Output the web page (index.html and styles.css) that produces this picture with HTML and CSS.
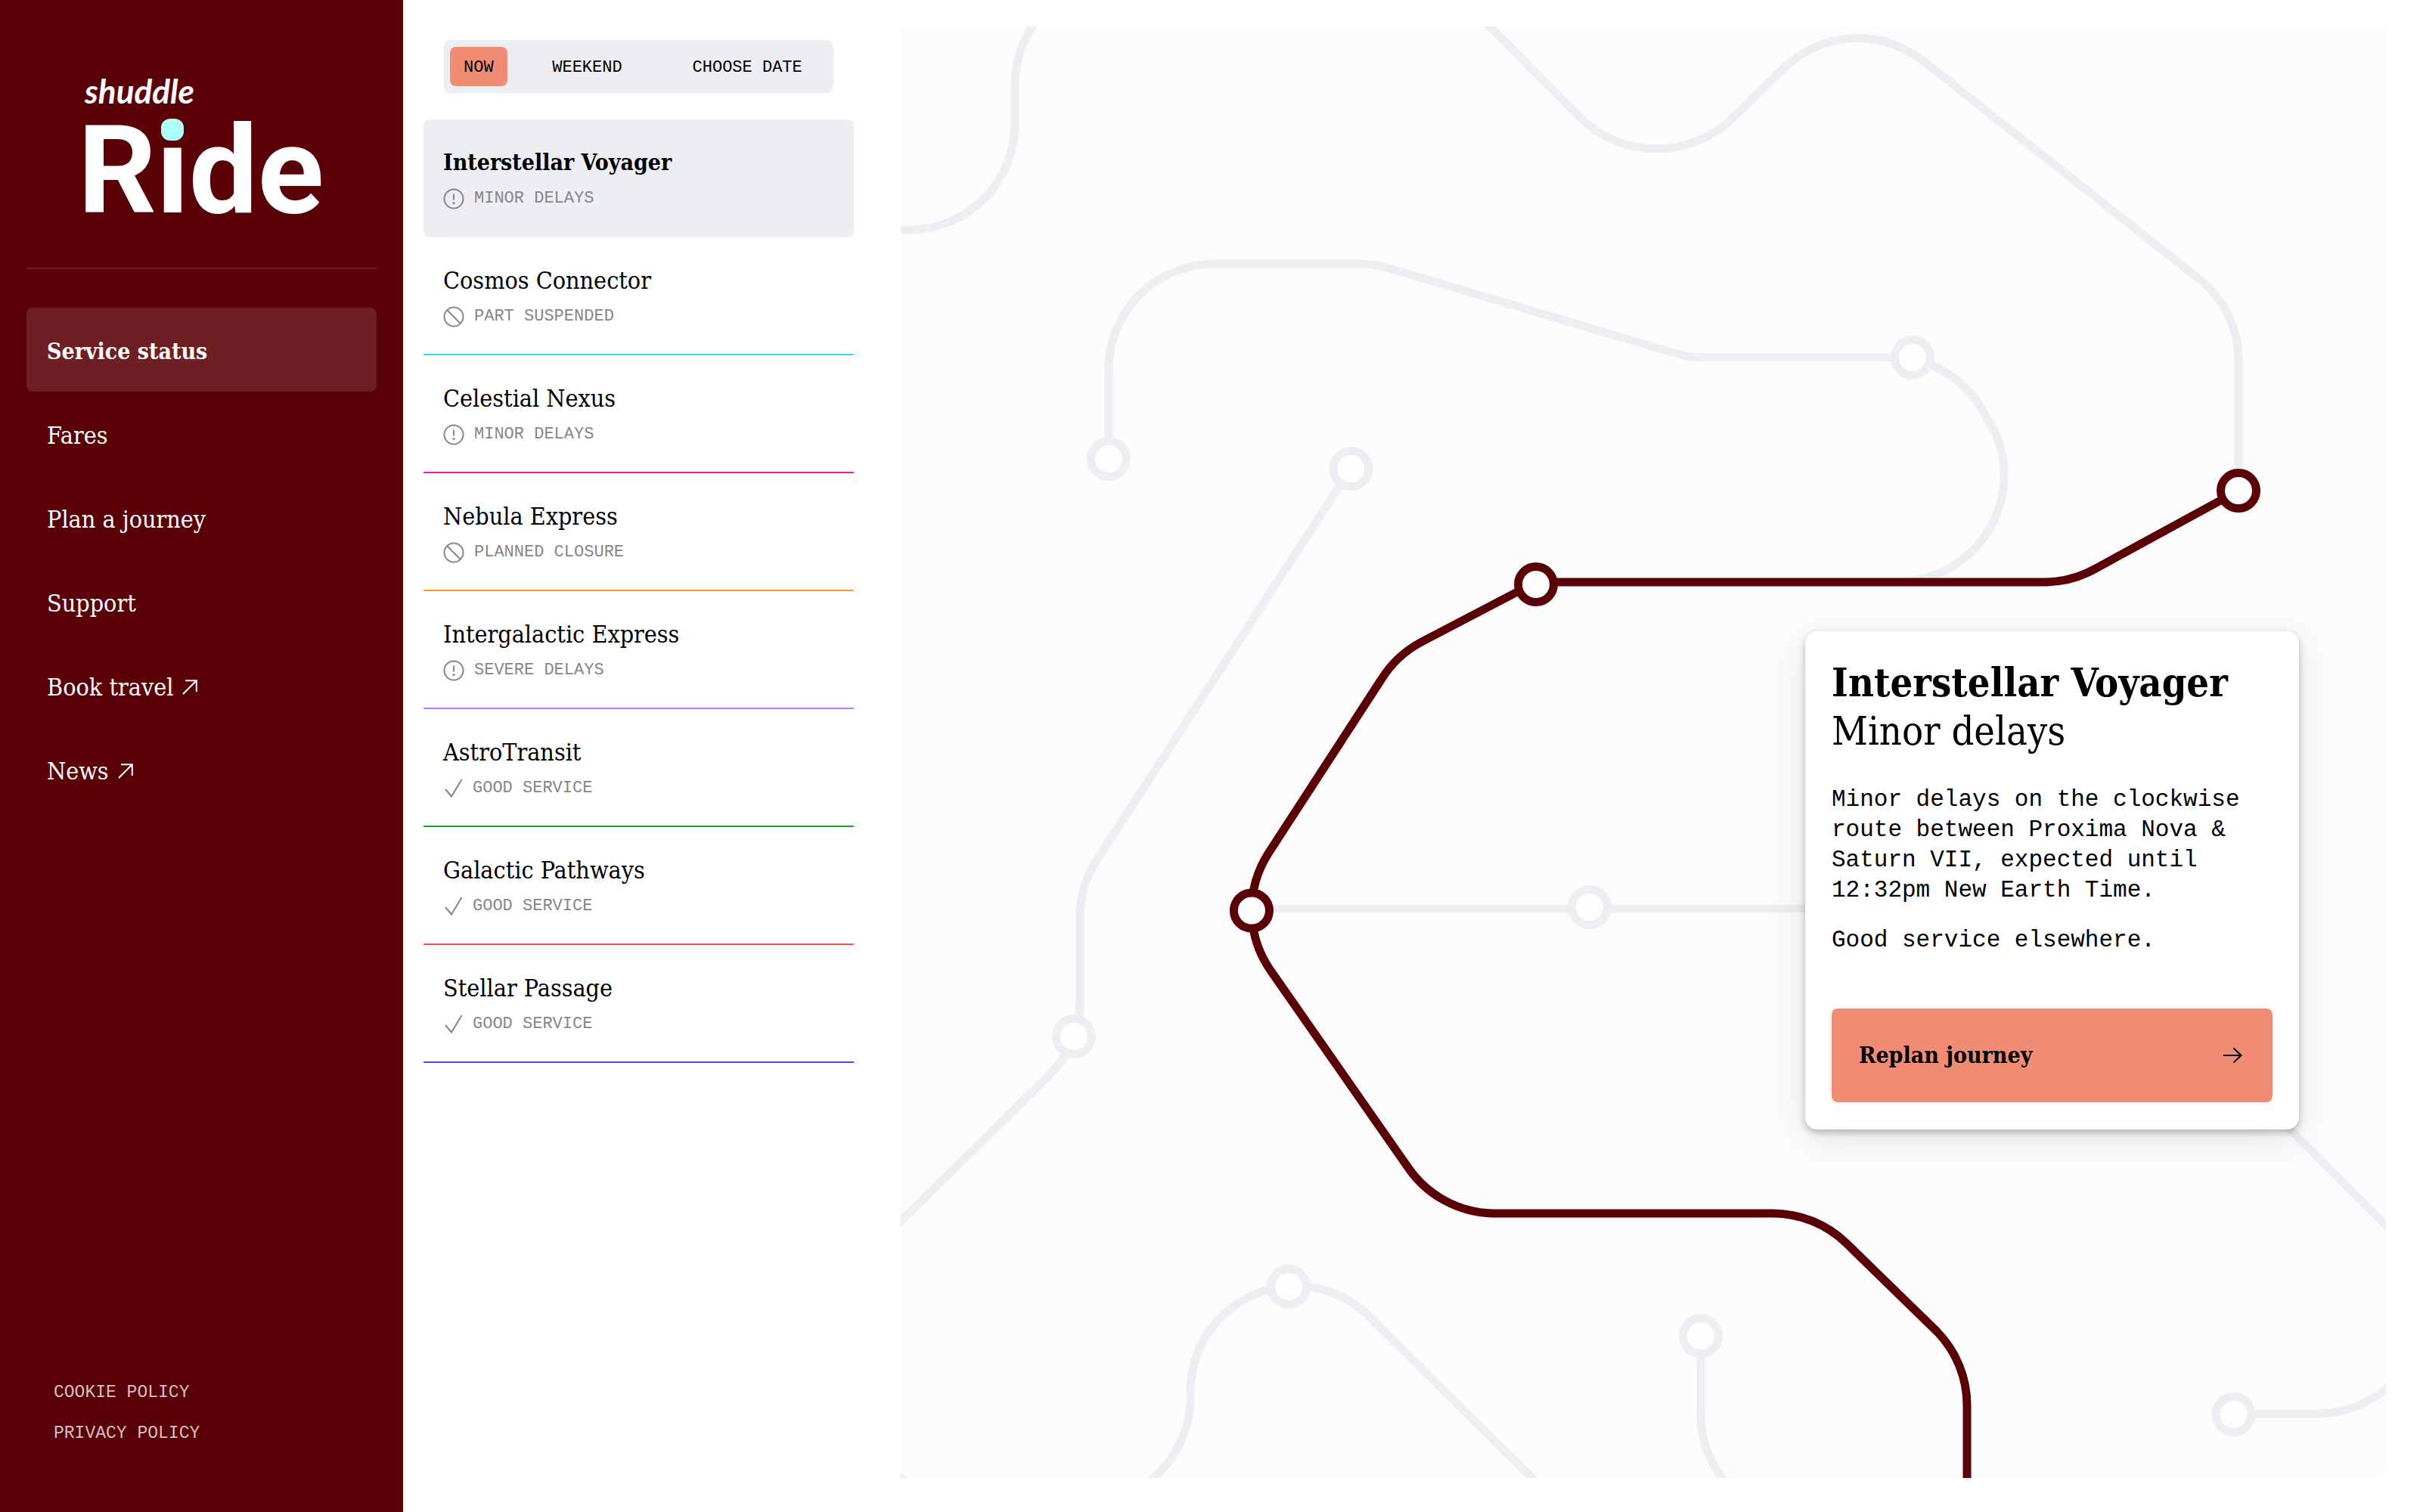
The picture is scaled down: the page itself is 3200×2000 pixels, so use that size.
FILE: index.html
```html
<!DOCTYPE html>
<html lang="en">
<head>
<meta charset="utf-8">
<title>Shuddle Ride – Service status</title>
<link rel="stylesheet" href="styles.css">
</head>
<body>
<svg class="sprite" aria-hidden="true">
  <symbol id="icon-alert" viewBox="0 0 28 28"><circle cx="14" cy="14" r="12.5"/><path d="M14 7.500v8"/><circle class="solid" cx="14" cy="19.500" r="1.600"/></symbol>
  <symbol id="icon-blocked" viewBox="0 0 28 28"><circle cx="14" cy="14" r="12.5"/><path d="M5.300 5.300l17.400 17.400"/></symbol>
  <symbol id="icon-check" viewBox="0 0 26 28"><path d="M3 15l8 9.500L24.500 2"/></symbol>
  <symbol id="icon-external" viewBox="0 0 20 20"><path d="M4 1.200h14.800V16M18.800 1.200L1 19"/></symbol>
  <symbol id="icon-arrow" viewBox="0 0 26 22"><path d="M1 11h23M14.500 1.500L24.500 11l-10 9.500"/></symbol>
</svg>
<div class="app">
  <aside class="sidebar">
    <a class="logo" href="#">
      <span class="logo-brand">shuddle</span>
      <span class="logo-name">R<span class="logo-i">i</span>de</span>
    </a>
    <nav class="nav">
      <a class="nav-link active" href="#" aria-current="page">Service status</a>
      <a class="nav-link" href="#">Fares</a>
      <a class="nav-link" href="#">Plan a journey</a>
      <a class="nav-link" href="#">Support</a>
      <a class="nav-link" href="#">Book travel <svg class="external"><use href="#icon-external"/></svg></a>
      <a class="nav-link" href="#">News <svg class="external"><use href="#icon-external"/></svg></a>
    </nav>
    <footer class="legal">
      <a href="#">COOKIE POLICY</a>
      <a href="#">PRIVACY POLICY</a>
    </footer>
  </aside>

  <section class="services">
    <div class="tabs">
      <button class="tab selected" type="button">NOW</button>
      <button class="tab" type="button">WEEKEND</button>
      <button class="tab" type="button">CHOOSE DATE</button>
    </div>
    <ul class="lines">
      <li><a class="line current" href="#"><span class="line-name">Interstellar Voyager</span><span class="line-status"><svg class="round"><use href="#icon-alert"/></svg>MINOR DELAYS</span></a></li>
      <li><a class="line cyan" href="#"><span class="line-name">Cosmos Connector</span><span class="line-status"><svg class="round"><use href="#icon-blocked"/></svg>PART SUSPENDED</span></a></li>
      <li><a class="line pink" href="#"><span class="line-name">Celestial Nexus</span><span class="line-status"><svg class="round"><use href="#icon-alert"/></svg>MINOR DELAYS</span></a></li>
      <li><a class="line orange" href="#"><span class="line-name">Nebula Express</span><span class="line-status"><svg class="round"><use href="#icon-blocked"/></svg>PLANNED CLOSURE</span></a></li>
      <li><a class="line purple" href="#"><span class="line-name">Intergalactic Express</span><span class="line-status"><svg class="round"><use href="#icon-alert"/></svg>SEVERE DELAYS</span></a></li>
      <li><a class="line green" href="#"><span class="line-name">AstroTransit</span><span class="line-status"><svg class="check"><use href="#icon-check"/></svg>GOOD SERVICE</span></a></li>
      <li><a class="line red" href="#"><span class="line-name">Galactic Pathways</span><span class="line-status"><svg class="check"><use href="#icon-check"/></svg>GOOD SERVICE</span></a></li>
      <li><a class="line indigo" href="#"><span class="line-name">Stellar Passage</span><span class="line-status"><svg class="check"><use href="#icon-check"/></svg>GOOD SERVICE</span></a></li>
    </ul>
  </section>

  <main class="map">
    <svg class="network" viewBox="1191 35 1964 1920" preserveAspectRatio="xMidYMid slice" role="img" aria-label="Route map">
      <g class="routes">
        <path d="M1191 304H1202A140 140 0 0 0 1342 165V112A140 140 0 0 1 1482 -28"/>
        <path d="M1960 25L2090 156A144 144 0 0 0 2291 156L2357 92A140 140 0 0 1 2546 83L2909 370A135 135 0 0 1 2960 475V640"/>
        <path d="M1466 607V487A140 140 0 0 1 1606 349H1797Q1817 349 1837 355L2214 467Q2234 473 2254 473H2529C2575 487 2608 515 2627 552A140 140 0 0 1 2510 769"/>
        <path d="M1786 620L1450 1138A140 140 0 0 0 1428 1214V1322A140 140 0 0 1 1389 1421L1181 1625"/>
        <path d="M1655 1202H2678A140 140 0 0 1 2777 1243L3170 1636"/>
        <path d="M1181 1949L1211 1967"/>
        <path d="M1500 1972A140 140 0 0 0 1574 1847V1840A140 140 0 0 1 1710 1701A140 140 0 0 1 1809 1740L2046 1975"/>
        <path d="M2249 1767V1867A140 140 0 0 0 2308 1985"/>
        <path d="M2954 1870H3065A140 140 0 0 0 3175 1816"/>
      </g>
      <g class="stations">
        <circle cx="1466" cy="607" r="23.500"/>
        <circle cx="1786.500" cy="620" r="23.500"/>
        <circle cx="2529" cy="473" r="23.500"/>
        <circle cx="2102" cy="1200" r="23.500"/>
        <circle cx="1420" cy="1371" r="23.500"/>
        <circle cx="1704" cy="1702" r="23.500"/>
        <circle cx="2249" cy="1767" r="23.500"/>
        <circle cx="2953.500" cy="1871" r="23.500"/>
      </g>
      <g class="routes selected">
        <path d="M2960 649L2773 751A140 140 0 0 1 2706 770H2031"/>
        <path d="M2031 770L1878 850A140 140 0 0 0 1827 898L1677 1129A140 140 0 0 0 1681 1285L1861 1543A140 140 0 0 0 1974 1605H2343A140 140 0 0 1 2442 1645L2561 1761A140 140 0 0 1 2601 1860V1955"/>
      </g>
      <g class="stations selected">
        <circle cx="2960" cy="649" r="23.500"/>
        <circle cx="2031" cy="773" r="23.500"/>
        <circle cx="1655" cy="1204.500" r="23.500"/>
      </g>
    </svg>
    <article class="card">
      <h1 class="card-title">Interstellar Voyager</h1>
      <p class="card-status">Minor delays</p>
      <p class="card-text">Minor delays on the clockwise route between Proxima Nova &amp; Saturn VII, expected until 12:32pm New Earth Time.</p>
      <p class="card-text">Good service elsewhere.</p>
      <button class="replan" type="button">Replan journey <svg class="arrow"><use href="#icon-arrow"/></svg></button>
    </article>
  </main>
</div>
</body>
</html>
```
FILE: styles.css
```css
:root {
  --maroon: #5a0007;
  --mist: #edeef2;
  --coral: #f18c74;
  --serif: "DejaVu Serif Condensed", "DejaVu Serif", serif;
  --mono: "Liberation Mono", monospace;
}

* { box-sizing: border-box; }

body {
  margin: 0;
  background: #fff;
  color: #000;
  font-family: var(--serif);
}

a { color: inherit; text-decoration: none; }
button { border: 0; padding: 0; color: inherit; cursor: pointer; }
svg { fill: none; stroke: currentColor; }
.sprite { position: absolute; width: 0; height: 0; }
.solid { fill: currentColor; stroke: none; }

.app {
  display: grid;
  grid-template-columns: 533px 596px minmax(0, 1fr);
  min-height: 100vh;
}

/* Sidebar */
.sidebar {
  display: flex;
  flex-direction: column;
  padding: 100px 35px 88px;
  background: var(--maroon);
  color: #fff;
}

.logo {
  display: flex;
  flex-direction: column;
  gap: 12px;
  padding: 0 77px 54px;
  border-bottom: 2px solid #6f1e24;
}

.logo-brand {
  font: italic bold 44px/40px Lato, sans-serif;
}

.logo-name {
  margin-left: -9px;
  font: bold 162px/148px Roboto, sans-serif;
}

.logo-i { position: relative; }

.logo-i::after {
  content: "";
  position: absolute;
  top: 26px;
  left: 50%;
  width: 30px;
  height: 29px;
  margin-left: -15px;
  border-radius: 12px;
  background: #adfff8;
}

.nav {
  display: flex;
  flex-direction: column;
  padding-top: 51px;
}

.nav-link {
  display: flex;
  align-items: center;
  gap: 12px;
  padding: 38px 27px 33px;
  border-radius: 8px;
  font-size: 32px;
  line-height: 40px;
}

.nav-link.active {
  background: #6f1e24;
  font-size: 30px;
  font-weight: bold;
}

.external { width: 20px; height: 20px; stroke-width: 2; }

.legal {
  display: flex;
  flex-direction: column;
  gap: 22px;
  margin-top: auto;
  padding-left: 36px;
  color: #d6bfc1;
  font: 23px/32px var(--mono);
}

/* Service list */
.services { padding: 53px 0 0 27px; }

.tabs {
  display: flex;
  margin: 0 27px;
  padding: 9px 8px;
  border-radius: 8px;
  background: var(--mist);
}

.tab {
  flex: 1;
  height: 52px;
  padding-top: 4px;
  border-radius: 8px;
  background: none;
  font: 22px/32px var(--mono);
}

.tab.selected {
  flex: none;
  padding: 4px 18px 0;
  background: var(--coral);
}

.lines {
  margin: 35px 0 0;
  padding: 0;
  list-style: none;
}

.line {
  display: flex;
  flex-direction: column;
  gap: 12px;
  padding: 37px 26px 33px;
  border-bottom: 2px solid;
}

.line.current {
  border-color: transparent;
  border-radius: 8px;
  background: var(--mist);
}

.line.current .line-name { font-size: 30px; font-weight: bold; }
.cyan { border-color: #33d6ff; }
.pink { border-color: #f81894; }
.orange { border-color: #ff9633; }
.purple { border-color: #b57cff; }
.green { border-color: #1f9e2c; }
.red { border-color: #ff4d4d; }
.indigo { border-color: #5540f5; }

.line-name { font-size: 32px; line-height: 40px; }

.line-status {
  display: flex;
  align-items: center;
  gap: 13px;
  color: #868686;
  font: 22px/32px var(--mono);
}

.round { width: 28px; height: 28px; stroke-width: 2; }
.check { width: 26px; height: 28px; stroke-width: 2; }

/* Map */
.map {
  position: relative;
  margin: 35px 45px 45px 62px;
  border-radius: 0 0 16px 0;
  background: #fcfcfc;
}

.network {
  position: absolute;
  inset: 0;
  width: 100%;
  height: 100%;
}

.routes { stroke: var(--mist); stroke-width: 11; }
.stations { fill: #fdfdfd; stroke: var(--mist); stroke-width: 11; }
.network .selected { stroke: var(--maroon); }

.card {
  position: absolute;
  top: 800px;
  right: 115px;
  width: 653px;
  padding: 36px 35px;
  border-radius: 16px;
  background: #fff;
  box-shadow: 0 4px 10px rgba(0, 0, 0, .25), 0 12px 52px rgba(0, 0, 0, .1);
}

.card-title,
.card-status {
  margin: 0;
  font-size: 52px;
  line-height: 64px;
}

.card-status { margin-bottom: 39px; font-weight: 300; }

.card-text {
  margin: 0 0 26px;
  font: 31px/40px var(--mono);
}

.replan {
  display: flex;
  align-items: center;
  justify-content: space-between;
  width: 100%;
  height: 124px;
  margin-top: 70px;
  padding: 0 40px 0 36px;
  border-radius: 8px;
  background: var(--coral);
  font: bold 30px/40px var(--serif);
}

.arrow { width: 26px; height: 22px; stroke-width: 2; }
```
